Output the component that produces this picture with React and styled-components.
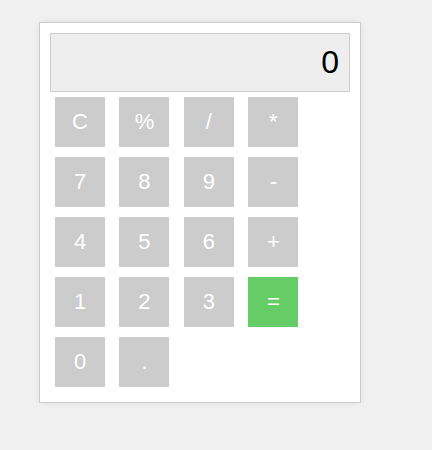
import React from 'react';
import styled, { createGlobalStyle } from 'styled-components';

const GlobalStyle = createGlobalStyle`
  body {
    margin: 0;
    background: #f1f1f1;
    font-family: 'Liberation Sans', Arial, sans-serif;
  }
`;

const keys = [
  ['C', '%', '/', '*'],
  ['7', '8', '9', '-'],
  ['4', '5', '6', '+'],
  ['1', '2', '3', '='],
  ['0', '.'],
];

function App() {
  return (
    <>
      <GlobalStyle />
      <Page>
        <Calculator>
          <Display>0</Display>
          <Keypad>
            {keys.flat().map((k) => (
              <Key key={k} $accent={k === '='}>{k}</Key>
            ))}
          </Keypad>
        </Calculator>
      </Page>
    </>
  );
}

export default App;

const Page = styled.div`
  min-height: 450px;
  padding: 22px 0 0 39px;
  box-sizing: border-box;
`;

const Calculator = styled.div`
  width: 322px;
  box-sizing: border-box;
  padding: 10px;
  background: #fff;
  border: 1px solid #cccccc;
  box-shadow: 0 0 8px rgba(0, 0, 0, 0.08);
`;

const Display = styled.div`
  height: 59px;
  box-sizing: border-box;
  border: 1px solid #cccccc;
  background: #eeeeee;
  color: #000;
  font-size: 32px;
  line-height: 57px;
  text-align: right;
  padding-right: 10px;
`;

const Keypad = styled.div`
  display: grid;
  grid-template-columns: repeat(4, 50px);
  column-gap: 14.45px;
  row-gap: 10px;
  padding: 5px 0 5px 5px;
`;

const Key = styled.button`
  width: 50px;
  height: 50px;
  border: none;
  padding: 0;
  background: ${(p) => (p.$accent ? '#66cc66' : '#cccccc')};
  color: #fff;
  font-family: 'Liberation Sans', Arial, sans-serif;
  font-size: 22px;
`;
